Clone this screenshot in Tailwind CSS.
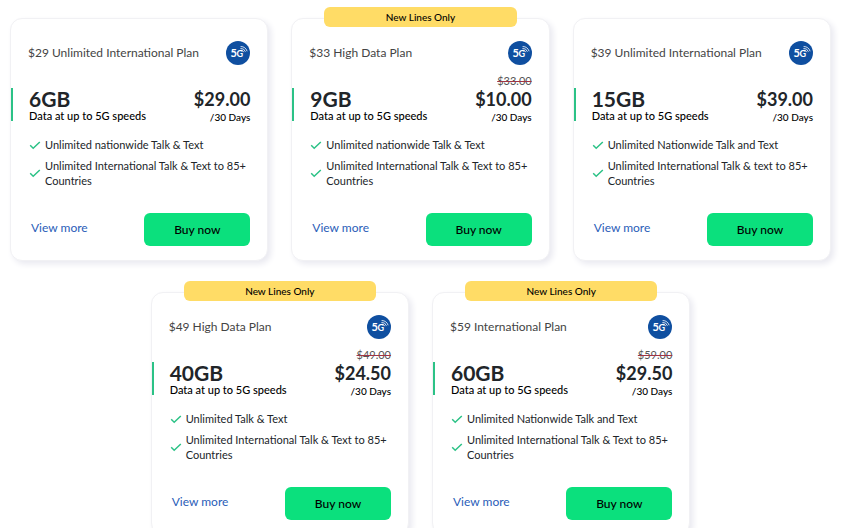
<!DOCTYPE html>
<html lang="en">
<head>
  <meta charset="UTF-8">
  <meta name="viewport" content="width=device-width, initial-scale=1.0">
  <title>International Plans</title>
  <script src="https://cdn.jsdelivr.net/npm/@tailwindcss/browser@4"></script>
</head>
<body class="bg-white font-['Lato',sans-serif] text-[#212529]">

  <!-- Shared icons -->
  <svg class="hidden">
    <symbol id="icon-5g" viewBox="0 0 24 24">
      <circle cx="12" cy="12" r="12" fill="#0f4fa0"/>
      <text x="4.4" y="16.2" font-size="11" font-weight="700" fill="#fff">5</text>
      <text x="10.6" y="16.2" font-size="9" font-weight="700" fill="#fff">G</text>
      <g fill="none" stroke="#fff" stroke-width="0.8" stroke-linecap="round">
        <path d="M15 9.2a2.4 2.4 0 0 1 2.6 1.6"/>
        <path d="M14.8 7.4a4.4 4.4 0 0 1 4.5 3"/>
        <path d="M15 5.5a6.4 6.4 0 0 1 6 4.4"/>
      </g>
    </symbol>
    <symbol id="icon-check" viewBox="0 0 12 10">
      <path d="M1.2 5.2l3 3L10.8 2" fill="none" stroke="#2bc286" stroke-width="1.5"/>
    </symbol>
  </svg>

  <main class="flex flex-wrap justify-center gap-x-[23px] gap-y-[31px] px-[10px] pt-[18px] pb-8">

    <article class="relative w-[calc((100%-46px)/3)] rounded-xl border border-[#f1f1f4] bg-white pt-[22px] pb-[14px] shadow-[3px_3px_6px_#e9e9f0]">
      <div class="flex items-center justify-between px-[17px]">
        <h2 class="text-[12px] text-[#444]">$29 Unlimited International Plan</h2>
        <svg class="size-6" role="img" aria-label="5G"><use href="#icon-5g"/></svg>
      </div>
      <div class="mt-2 flex h-[50px] items-end justify-between pr-[17px]">
        <div class="mb-[2px] h-[33px] border-l-2 border-[#2bc286] pl-4">
          <p class="text-[21px] leading-[22px] font-bold">6GB</p>
          <p class="text-[11px] leading-[11px] font-medium text-black">Data at up to 5G speeds</p>
        </div>
        <div class="text-right">
          <p class="text-[18px] leading-6 font-bold">$29.00</p>
          <p class="text-[10px] leading-3 font-medium text-black">/30 Days</p>
        </div>
      </div>
      <ul class="mt-[14px] flex flex-col gap-[6px] pl-[18px] pr-4 text-[11px] leading-[15px]">
        <li class="flex items-center gap-1"><svg class="h-[10px] w-3 shrink-0"><use href="#icon-check"/></svg>Unlimited nationwide Talk &amp; Text</li>
        <li class="flex items-center gap-1"><svg class="h-[10px] w-3 shrink-0"><use href="#icon-check"/></svg>Unlimited International Talk &amp; Text to 85+ Countries</li>
      </ul>
      <div class="mt-[25px] flex items-center justify-between pl-5 pr-[17px]">
        <a href="#" class="pb-1 text-[12px] text-[#2a5db8]">View more</a>
        <button class="h-[33px] w-[106px] rounded-md bg-[#0be07d] text-[12px] font-medium text-black">Buy now</button>
      </div>
    </article>

    <article class="relative w-[calc((100%-46px)/3)] rounded-xl border border-[#f1f1f4] bg-white pt-[22px] pb-[14px] shadow-[3px_3px_6px_#e9e9f0]">
      <span class="absolute inset-x-8 -top-3 h-5 rounded-md bg-[#ffdc66] text-center text-[10px] leading-5 font-medium text-black">New Lines Only</span>
      <div class="flex items-center justify-between px-[17px]">
        <h2 class="text-[12px] text-[#444]">$33 High Data Plan</h2>
        <svg class="size-6" role="img" aria-label="5G"><use href="#icon-5g"/></svg>
      </div>
      <div class="mt-2 flex h-[50px] items-end justify-between pr-[17px]">
        <div class="mb-[2px] h-[33px] border-l-2 border-[#2bc286] pl-4">
          <p class="text-[21px] leading-[22px] font-bold">9GB</p>
          <p class="text-[11px] leading-[11px] font-medium text-black">Data at up to 5G speeds</p>
        </div>
        <div class="text-right">
          <p class="text-[11px] leading-3 text-[#555] line-through decoration-[#a03545]">$33.00</p>
          <p class="text-[18px] leading-6 font-bold">$10.00</p>
          <p class="text-[10px] leading-3 font-medium text-black">/30 Days</p>
        </div>
      </div>
      <ul class="mt-[14px] flex flex-col gap-[6px] pl-[18px] pr-4 text-[11px] leading-[15px]">
        <li class="flex items-center gap-1"><svg class="h-[10px] w-3 shrink-0"><use href="#icon-check"/></svg>Unlimited nationwide Talk &amp; Text</li>
        <li class="flex items-center gap-1"><svg class="h-[10px] w-3 shrink-0"><use href="#icon-check"/></svg>Unlimited International Talk &amp; Text to 85+ Countries</li>
      </ul>
      <div class="mt-[25px] flex items-center justify-between pl-5 pr-[17px]">
        <a href="#" class="pb-1 text-[12px] text-[#2a5db8]">View more</a>
        <button class="h-[33px] w-[106px] rounded-md bg-[#0be07d] text-[12px] font-medium text-black">Buy now</button>
      </div>
    </article>

    <article class="relative w-[calc((100%-46px)/3)] rounded-xl border border-[#f1f1f4] bg-white pt-[22px] pb-[14px] shadow-[3px_3px_6px_#e9e9f0]">
      <div class="flex items-center justify-between px-[17px]">
        <h2 class="text-[12px] text-[#444]">$39 Unlimited International Plan</h2>
        <svg class="size-6" role="img" aria-label="5G"><use href="#icon-5g"/></svg>
      </div>
      <div class="mt-2 flex h-[50px] items-end justify-between pr-[17px]">
        <div class="mb-[2px] h-[33px] border-l-2 border-[#2bc286] pl-4">
          <p class="text-[21px] leading-[22px] font-bold">15GB</p>
          <p class="text-[11px] leading-[11px] font-medium text-black">Data at up to 5G speeds</p>
        </div>
        <div class="text-right">
          <p class="text-[18px] leading-6 font-bold">$39.00</p>
          <p class="text-[10px] leading-3 font-medium text-black">/30 Days</p>
        </div>
      </div>
      <ul class="mt-[14px] flex flex-col gap-[6px] pl-[18px] pr-4 text-[11px] leading-[15px]">
        <li class="flex items-center gap-1"><svg class="h-[10px] w-3 shrink-0"><use href="#icon-check"/></svg>Unlimited Nationwide Talk and Text</li>
        <li class="flex items-center gap-1"><svg class="h-[10px] w-3 shrink-0"><use href="#icon-check"/></svg>Unlimited International Talk &amp; text to 85+ Countries</li>
      </ul>
      <div class="mt-[25px] flex items-center justify-between pl-5 pr-[17px]">
        <a href="#" class="pb-1 text-[12px] text-[#2a5db8]">View more</a>
        <button class="h-[33px] w-[106px] rounded-md bg-[#0be07d] text-[12px] font-medium text-black">Buy now</button>
      </div>
    </article>

    <article class="relative w-[calc((100%-46px)/3)] rounded-xl border border-[#f1f1f4] bg-white pt-[22px] pb-[14px] shadow-[3px_3px_6px_#e9e9f0]">
      <span class="absolute inset-x-8 -top-3 h-5 rounded-md bg-[#ffdc66] text-center text-[10px] leading-5 font-medium text-black">New Lines Only</span>
      <div class="flex items-center justify-between px-[17px]">
        <h2 class="text-[12px] text-[#444]">$49 High Data Plan</h2>
        <svg class="size-6" role="img" aria-label="5G"><use href="#icon-5g"/></svg>
      </div>
      <div class="mt-2 flex h-[50px] items-end justify-between pr-[17px]">
        <div class="mb-[2px] h-[33px] border-l-2 border-[#2bc286] pl-4">
          <p class="text-[21px] leading-[22px] font-bold">40GB</p>
          <p class="text-[11px] leading-[11px] font-medium text-black">Data at up to 5G speeds</p>
        </div>
        <div class="text-right">
          <p class="text-[11px] leading-3 text-[#555] line-through decoration-[#a03545]">$49.00</p>
          <p class="text-[18px] leading-6 font-bold">$24.50</p>
          <p class="text-[10px] leading-3 font-medium text-black">/30 Days</p>
        </div>
      </div>
      <ul class="mt-[14px] flex flex-col gap-[6px] pl-[18px] pr-4 text-[11px] leading-[15px]">
        <li class="flex items-center gap-1"><svg class="h-[10px] w-3 shrink-0"><use href="#icon-check"/></svg>Unlimited Talk &amp; Text</li>
        <li class="flex items-center gap-1"><svg class="h-[10px] w-3 shrink-0"><use href="#icon-check"/></svg>Unlimited International Talk &amp; Text to 85+ Countries</li>
      </ul>
      <div class="mt-[25px] flex items-center justify-between pl-5 pr-[17px]">
        <a href="#" class="pb-1 text-[12px] text-[#2a5db8]">View more</a>
        <button class="h-[33px] w-[106px] rounded-md bg-[#0be07d] text-[12px] font-medium text-black">Buy now</button>
      </div>
    </article>

    <article class="relative w-[calc((100%-46px)/3)] rounded-xl border border-[#f1f1f4] bg-white pt-[22px] pb-[14px] shadow-[3px_3px_6px_#e9e9f0]">
      <span class="absolute inset-x-8 -top-3 h-5 rounded-md bg-[#ffdc66] text-center text-[10px] leading-5 font-medium text-black">New Lines Only</span>
      <div class="flex items-center justify-between px-[17px]">
        <h2 class="text-[12px] text-[#444]">$59 International Plan</h2>
        <svg class="size-6" role="img" aria-label="5G"><use href="#icon-5g"/></svg>
      </div>
      <div class="mt-2 flex h-[50px] items-end justify-between pr-[17px]">
        <div class="mb-[2px] h-[33px] border-l-2 border-[#2bc286] pl-4">
          <p class="text-[21px] leading-[22px] font-bold">60GB</p>
          <p class="text-[11px] leading-[11px] font-medium text-black">Data at up to 5G speeds</p>
        </div>
        <div class="text-right">
          <p class="text-[11px] leading-3 text-[#555] line-through decoration-[#a03545]">$59.00</p>
          <p class="text-[18px] leading-6 font-bold">$29.50</p>
          <p class="text-[10px] leading-3 font-medium text-black">/30 Days</p>
        </div>
      </div>
      <ul class="mt-[14px] flex flex-col gap-[6px] pl-[18px] pr-4 text-[11px] leading-[15px]">
        <li class="flex items-center gap-1"><svg class="h-[10px] w-3 shrink-0"><use href="#icon-check"/></svg>Unlimited Nationwide Talk and Text</li>
        <li class="flex items-center gap-1"><svg class="h-[10px] w-3 shrink-0"><use href="#icon-check"/></svg>Unlimited International Talk &amp; Text to 85+ Countries</li>
      </ul>
      <div class="mt-[25px] flex items-center justify-between pl-5 pr-[17px]">
        <a href="#" class="pb-1 text-[12px] text-[#2a5db8]">View more</a>
        <button class="h-[33px] w-[106px] rounded-md bg-[#0be07d] text-[12px] font-medium text-black">Buy now</button>
      </div>
    </article>

  </main>
</body>
</html>
